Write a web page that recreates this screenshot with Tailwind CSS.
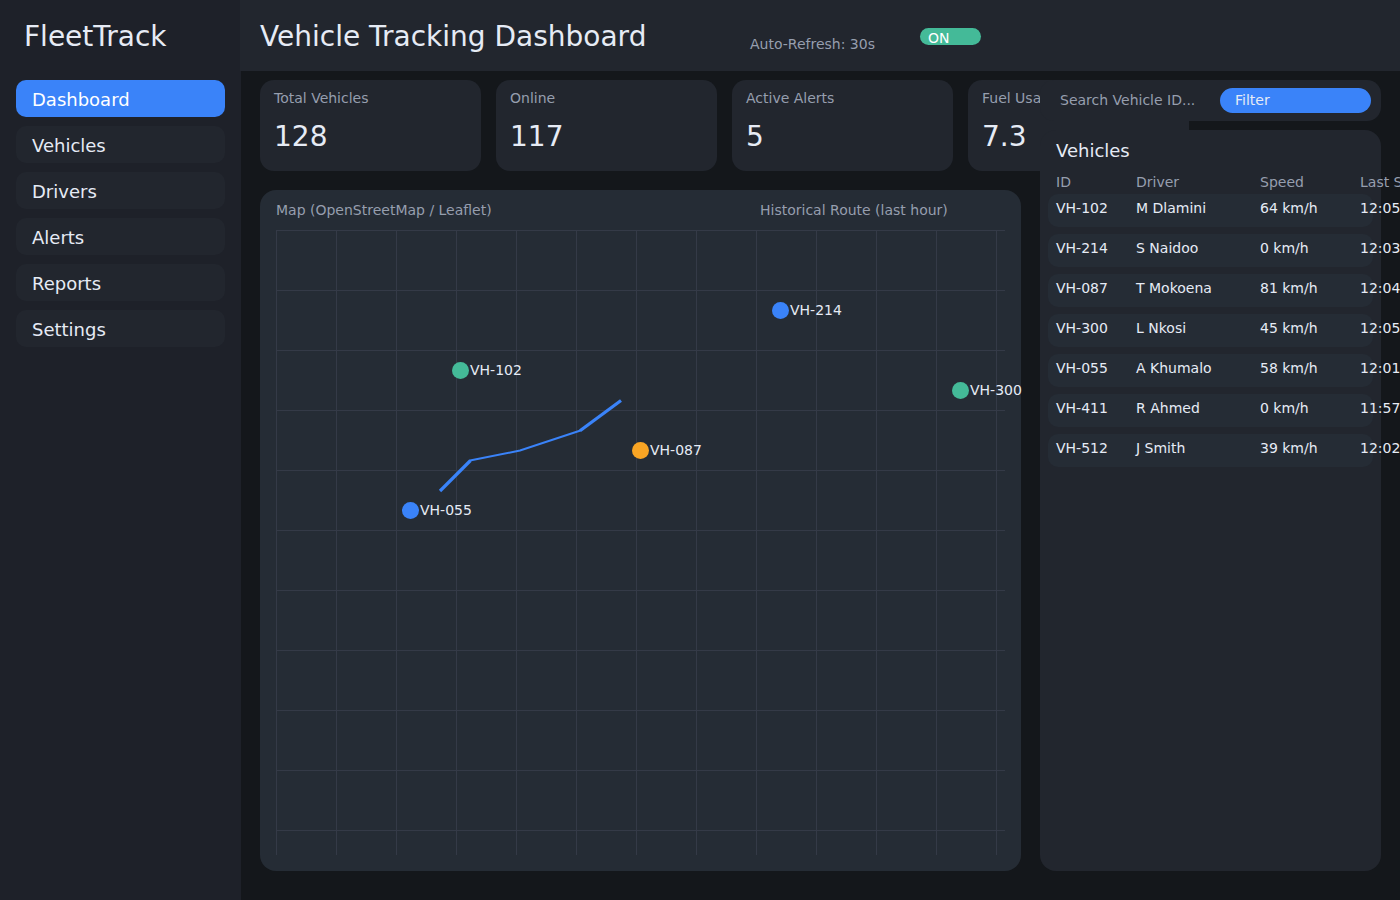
<!DOCTYPE html>
<html lang="en">
<head>
<meta charset="utf-8">
<meta name="viewport" content="width=device-width, initial-scale=1">
<title>FleetTrack</title>
<script src="https://cdn.jsdelivr.net/npm/@tailwindcss/browser@4"></script>
</head>
<body class="flex min-h-screen overflow-x-hidden bg-[#14171b] font-['DejaVu_Sans',sans-serif] text-sm text-[#e6ebf5]">

<aside class="w-[241px] shrink-0 bg-[#1e2129] px-4 pt-4">
  <div class="h-16 px-2 text-[28px] leading-[42px]">FleetTrack</div>
  <nav class="flex flex-col gap-[9px] text-lg" aria-label="Main">
    <a href="#" aria-current="page" class="flex h-[37px] items-center rounded-[10px] bg-[#3a83f9] px-4 pt-0.5 text-white">Dashboard</a>
    <a href="#" class="flex h-[37px] items-center rounded-[10px] bg-[#22262e] px-4 pt-0.5">Vehicles</a>
    <a href="#" class="flex h-[37px] items-center rounded-[10px] bg-[#22262e] px-4 pt-0.5">Drivers</a>
    <a href="#" class="flex h-[37px] items-center rounded-[10px] bg-[#22262e] px-4 pt-0.5">Alerts</a>
    <a href="#" class="flex h-[37px] items-center rounded-[10px] bg-[#22262e] px-4 pt-0.5">Reports</a>
    <a href="#" class="flex h-[37px] items-center rounded-[10px] bg-[#22262e] px-4 pt-0.5">Settings</a>
  </nav>
</aside>

<div class="flex min-w-0 flex-1 flex-col">
  <header class="-ml-px flex h-[71px] shrink-0 items-start bg-[#22262e] pl-5">
    <h1 class="w-[490px] shrink-0 pt-4 text-[28px] leading-[42px]">Vehicle Tracking Dashboard</h1>
    <p class="w-[170px] shrink-0 pt-[34px] text-[#969eae]">Auto-Refresh: 30s</p>
    <button type="button" aria-pressed="true" class="mt-7 h-[17px] w-[61px] shrink-0 rounded-full bg-[#44ba98] px-2 text-left leading-5 text-white">ON</button>
  </header>

  <main class="flex flex-1 gap-[19px] px-[19px] pt-[9px] pb-[29px]">
    <div class="flex min-w-0 flex-1 flex-col gap-[19px]">
      <section class="flex gap-[15px]" aria-label="Summary">
        <div class="h-[91px] w-[221px] shrink-0 rounded-[14px] bg-[#22262e] px-3.5 pt-2">
          <p class="text-[#969eae]">Total Vehicles</p>
          <p class="pt-2 text-[28px] leading-[42px]">128</p>
        </div>
        <div class="h-[91px] w-[221px] shrink-0 rounded-[14px] bg-[#22262e] px-3.5 pt-2">
          <p class="text-[#969eae]">Online</p>
          <p class="pt-2 text-[28px] leading-[42px]">117</p>
        </div>
        <div class="h-[91px] w-[221px] shrink-0 rounded-[14px] bg-[#22262e] px-3.5 pt-2">
          <p class="text-[#969eae]">Active Alerts</p>
          <p class="pt-2 text-[28px] leading-[42px]">5</p>
        </div>
        <div class="h-[91px] w-[221px] shrink-0 rounded-[14px] bg-[#22262e] px-3.5 pt-2">
          <p class="text-[#969eae]">Fuel Usage</p>
          <p class="pt-2 text-[28px] leading-[42px]">7.3</p>
        </div>
      </section>

      <section class="flex flex-1 flex-col rounded-2xl bg-[#252c35] px-4 pb-4" aria-label="Map">
        <div class="flex h-10 items-center text-[#969eae]">
          <h2 class="w-[484px]">Map (OpenStreetMap / Leaflet)</h2>
          <p>Historical Route (last hour)</p>
        </div>
        <!-- Map canvas: 60px grid, last-hour route and vehicle pins -->
        <div class="relative flex-1 bg-[linear-gradient(#343a47_1px,transparent_1px),linear-gradient(90deg,#343a47_1px,transparent_1px)] bg-size-[60px_60px]">
          <svg class="absolute top-0 left-0" width="729" height="625" fill="none" stroke="#3a83f9" aria-hidden="true">
            <path d="M164 261 L194.500 230.500" stroke-width="3.200"/>
            <path d="M194 230.500 L244 220.500 L304.500 200.500" stroke-width="2"/>
            <path d="M304 200.800 L345 170.500" stroke-width="3.200"/>
          </svg>
          <div class="absolute top-[130px] left-[176px] flex items-start gap-px leading-5"><span class="mt-0.5 size-[17px] rounded-full bg-[#44ba98]"></span>VH-102</div>
          <div class="absolute top-[70px] left-[496px] flex items-start gap-px leading-5"><span class="mt-0.5 size-[17px] rounded-full bg-[#3a83f9]"></span>VH-214</div>
          <div class="absolute top-[210px] left-[356px] flex items-start gap-px leading-5"><span class="mt-0.5 size-[17px] rounded-full bg-[#f9a524]"></span>VH-087</div>
          <div class="absolute top-[150px] left-[676px] flex items-start gap-px leading-5 whitespace-nowrap"><span class="mt-0.5 size-[17px] shrink-0 rounded-full bg-[#44ba98]"></span>VH-300</div>
          <div class="absolute top-[270px] left-[126px] flex items-start gap-px leading-5"><span class="mt-0.5 size-[17px] rounded-full bg-[#3a83f9]"></span>VH-055</div>
        </div>
      </section>
    </div>

    <div class="z-10 flex w-[341px] shrink-0 flex-col gap-[9px]">
      <form class="flex h-[41px] items-center rounded-[14px] bg-[#22262e] pr-2.5 pl-5">
        <input type="search" aria-label="Search Vehicle ID" placeholder="Search Vehicle ID..." class="w-40 bg-transparent pb-0.5 outline-none placeholder:text-[#969eae]">
        <button type="button" class="h-[25px] flex-1 rounded-full bg-[#3a83f9] px-[15px] pb-0.5 text-left">Filter</button>
      </form>

      <section class="flex-1 rounded-2xl bg-[#22262e] px-2 pt-1">
        <h2 class="px-2 text-lg leading-[34px]">Vehicles</h2>
        <table class="block whitespace-nowrap">
          <thead class="block">
            <tr class="flex h-[26px] items-center px-2 pt-0.5 text-[#969eae] *:shrink-0 *:text-left *:font-normal">
              <th class="w-20">ID</th><th class="w-[124px]">Driver</th><th class="w-[100px]">Speed</th><th>Last Seen</th>
            </tr>
          </thead>
          <tbody class="flex flex-col gap-[7px]">
            <tr class="flex h-[33px] items-center rounded-[10px] bg-[#252c35] px-2 pb-1.5 *:shrink-0"><td class="w-20">VH-102</td><td class="w-[124px]">M Dlamini</td><td class="w-[100px]">64 km/h</td><td>12:05</td></tr>
            <tr class="flex h-[33px] items-center rounded-[10px] bg-[#252c35] px-2 pb-1.5 *:shrink-0"><td class="w-20">VH-214</td><td class="w-[124px]">S Naidoo</td><td class="w-[100px]">0 km/h</td><td>12:03</td></tr>
            <tr class="flex h-[33px] items-center rounded-[10px] bg-[#252c35] px-2 pb-1.5 *:shrink-0"><td class="w-20">VH-087</td><td class="w-[124px]">T Mokoena</td><td class="w-[100px]">81 km/h</td><td>12:04</td></tr>
            <tr class="flex h-[33px] items-center rounded-[10px] bg-[#252c35] px-2 pb-1.5 *:shrink-0"><td class="w-20">VH-300</td><td class="w-[124px]">L Nkosi</td><td class="w-[100px]">45 km/h</td><td>12:05</td></tr>
            <tr class="flex h-[33px] items-center rounded-[10px] bg-[#252c35] px-2 pb-1.5 *:shrink-0"><td class="w-20">VH-055</td><td class="w-[124px]">A Khumalo</td><td class="w-[100px]">58 km/h</td><td>12:01</td></tr>
            <tr class="flex h-[33px] items-center rounded-[10px] bg-[#252c35] px-2 pb-1.5 *:shrink-0"><td class="w-20">VH-411</td><td class="w-[124px]">R Ahmed</td><td class="w-[100px]">0 km/h</td><td>11:57</td></tr>
            <tr class="flex h-[33px] items-center rounded-[10px] bg-[#252c35] px-2 pb-1.5 *:shrink-0"><td class="w-20">VH-512</td><td class="w-[124px]">J Smith</td><td class="w-[100px]">39 km/h</td><td>12:02</td></tr>
          </tbody>
        </table>
      </section>
    </div>
  </main>
</div>
</body>
</html>
